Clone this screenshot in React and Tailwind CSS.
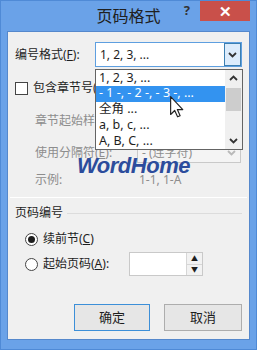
import React from 'react';

const font = { fontFamily: '"Noto Sans", "Noto Sans CJK SC", sans-serif' };

const Chevron = ({ up = false, className = '' }) => (
  <svg width="9" height="6" viewBox="0 0 9 6" className={className}>
    <path d={up ? 'M1 5 L4.5 1.5 L8 5' : 'M1 1 L4.5 4.5 L8 1'} fill="none" stroke="#333" strokeWidth="1.8" />
  </svg>
);

const Combo = ({ text, disabled, open, className = '' }) => (
  <div className={`flex h-full items-stretch border ${open ? 'border-[#5e9fe0]' : 'border-[#c9c9c9]'} ${disabled ? 'bg-[#f4f4f4]' : 'bg-white'} ${className}`}>
    <div className={`flex flex-1 items-center pl-[4px] ${disabled ? 'text-[#8f8f8f]' : 'text-[#1e1e1e]'}`}>{text}</div>
    <div className={`flex w-[17px] items-center justify-center ${open ? 'border border-[#3c7fb1] bg-[#dcecfc]' : ''}`}>
      <Chevron className={disabled ? 'opacity-30' : ''} />
    </div>
  </div>
);

const Radio = ({ checked }) => (
  <div className="flex h-[13px] w-[13px] items-center justify-center rounded-full border border-[#444] bg-white">
    {checked && <div className="h-[7px] w-[7px] rounded-full bg-[#1e1e1e]" />}
  </div>
);

const items = ['1, 2, 3, ...', '- 1 -, - 2 -, - 3 -, ...', '全角 ...', 'a, b, c, ...', 'A, B, C, ...'];

export default function App() {
  return (
    <div className="flex h-[350px] w-[257px] flex-col border border-[#4f8ad6] bg-[#6aa2e8] text-[12px] leading-none" style={font}>
      <div className="grid h-[30px] grid-cols-[1fr_auto_1fr]">
        <div />
        <div className="pt-[7px] text-[16px] text-[#202020]">页码格式</div>
        <div className="flex items-start justify-end pr-[6px]">
          <span className="mr-[10px] mt-[3px] text-[13px] font-bold text-[#333]">?</span>
          <div className="flex h-[20px] w-[50px] items-center justify-center bg-[#c9504a] text-[15px] font-bold text-white">✕</div>
        </div>
      </div>

      <div className="relative mx-[6px] flex h-[309px] flex-col border border-[#5588cc] bg-[#f0f0f0] text-[#1e1e1e]">
        <div className="mt-[10px] flex h-[25px] items-center pl-[7px]">
          <span className="w-[80px]">编号格式(<span className="underline">F</span>):</span>
          <Combo text="1, 2, 3, ..." open className="w-[147px]" />
        </div>

        <div className="mt-[13px] flex h-[16px] items-center pl-[7px]">
          <div className="h-[13px] w-[13px] border border-[#444] bg-white" />
          <span className="ml-[5px]">包含章节号(<span className="underline">N</span>)</span>
        </div>

        <div className="mt-[15px] flex h-[20px] items-center pl-[27px] text-[#8d8d8d]">
          <span className="w-[102px]">章节起始样式(<span className="underline">P</span>):</span>
          <Combo text="标题 1" disabled className="w-[104px]" />
        </div>

        <div className="mt-[12px] flex h-[20px] items-center pl-[27px] text-[#8d8d8d]">
          <span className="w-[102px]">使用分隔符(<span className="underline">E</span>):</span>
          <Combo text="-   (连字符)" disabled className="w-[104px]" />
        </div>

        <div className="mt-[9px] flex h-[16px] items-center pl-[27px] text-[#8d8d8d]">
          <span className="w-[104px]">示例:</span>
          <span>1-1, 1-A</span>
        </div>

        <div className="mx-[2px] mt-[9px] h-[1px] bg-white" />

        <div className="mt-[7px] flex h-[16px] items-center pl-[7px] pr-[7px]">
          <span>页码编号</span>
          <div className="ml-[4px] h-[1px] flex-1 bg-[#dcdcdc]" />
        </div>

        <div className="mt-[10px] flex h-[16px] items-center pl-[17px]">
          <Radio checked />
          <span className="ml-[5px]">续前节(<span className="underline">C</span>)</span>
        </div>

        <div className="mt-[5px] flex h-[24px] items-center pl-[17px]">
          <Radio />
          <span className="ml-[5px] w-[86px]">起始页码(<span className="underline">A</span>):</span>
          <div className="flex h-full w-[74px] border border-[#c9c9c9] bg-white">
            <div className="flex-1" />
            <div className="flex w-[16px] flex-col border-l border-[#d6d6d6]">
              <div className="flex flex-1 items-center justify-center border-b border-[#d6d6d6] bg-[#f2f2f2] text-[7px]">▲</div>
              <div className="flex flex-1 items-center justify-center bg-[#f2f2f2] text-[7px]">▼</div>
            </div>
          </div>
        </div>

        <div className="mt-[28px] flex h-[27px] justify-end gap-[14px] pr-[7px]">
          <div className="flex w-[76px] items-center justify-center border border-[#3c8fd8] bg-[#e6e6e6] text-[13px]">确定</div>
          <div className="flex w-[78px] items-center justify-center border border-[#adadad] bg-[#e6e6e6] text-[13px]">取消</div>
        </div>

        <div className="absolute left-[69px] top-[123px] text-[22px] font-bold italic tracking-[-0.5px] text-[#2c4c9c]" style={{ fontFamily: '"Liberation Sans", Arial, sans-serif' }}>
          WordHome
        </div>

        <div className="absolute left-[87px] top-[37px] flex h-[81px] w-[148px] border border-[#646464] bg-white">
          <div className="flex flex-1 flex-col">
            {items.map((t, i) => (
              <div key={t} className={`flex h-[16px] items-center pl-[3px] text-[12.5px] ${i === 1 ? 'bg-[#3393f0] text-white' : ''}`}>{t}</div>
            ))}
          </div>
          <div className="flex w-[17px] flex-col items-center bg-[#f0f0f0]">
            <div className="flex h-[16px] items-center"><Chevron up /></div>
            <div className="mt-[2px] h-[23px] w-[15px] bg-[#cdcdcd]" />
            <div className="flex-1" />
            <div className="flex h-[16px] items-center"><Chevron /></div>
          </div>
        </div>

        <svg className="absolute left-[162px] top-[64px]" width="14" height="22" viewBox="0 0 12 19">
          <path d="M0.5 0.5 L0.5 16 L4 12.5 L6.5 18 L8.7 17 L6.3 11.7 L11 11.7 Z" fill="white" stroke="#222" strokeWidth="1" strokeLinejoin="round" />
        </svg>
      </div>

      <div className="flex-1" />
    </div>
  );
}
